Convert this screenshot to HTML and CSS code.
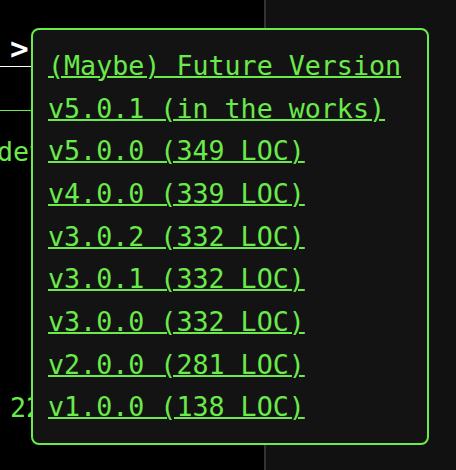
FILE: index.html
```html
<!DOCTYPE html>
<html>
<head>
<meta charset="utf-8">
<link rel="stylesheet" href="styles.css">
</head>
<body>
<div class="layout">
  <div class="left">
    <div class="top-row"><span class="prompt">&gt;</span></div>
    <div class="tab-row"></div>
    <div class="dev-row"><span>devlog</span></div>
    <div class="spacer"></div>
    <div class="num-row"><span>22</span></div>
  </div>
  <div class="divider"></div>
  <div class="right"></div>
</div>
<nav class="versions">
  <a href="#">(Maybe) Future Version</a>
  <a href="#">v5.0.1 (in the works)</a>
  <a href="#">v5.0.0 (349 LOC)</a>
  <a href="#">v4.0.0 (339 LOC)</a>
  <a href="#">v3.0.2 (332 LOC)</a>
  <a href="#">v3.0.1 (332 LOC)</a>
  <a href="#">v3.0.0 (332 LOC)</a>
  <a href="#">v2.0.0 (281 LOC)</a>
  <a href="#">v1.0.0 (138 LOC)</a>
</nav>
</body>
</html>
```
FILE: styles.css
```css
* { box-sizing: border-box; }
html, body {
  margin: 0;
  padding: 0;
  background: #000;
  overflow: hidden;
}
body {
  font-family: "DejaVu Sans Mono", monospace;
  font-size: 26.67px;
  color: #6aea4b;
  width: 456px;
  height: 470px;
  position: relative;
}
.layout {
  display: grid;
  grid-template-columns: 264px 2px 1fr;
  height: 470px;
}
.left {
  background: #000;
  display: flex;
  flex-direction: column;
  overflow: hidden;
}
.top-row {
  height: 67px;
  border-bottom: 1px solid #fff;
  display: flex;
  align-items: flex-end;
  padding: 0 0 2px 10px;
}
.prompt {
  color: #fff;
  font-weight: bold;
  font-size: 31px;
  line-height: 1;
}
.tab-row {
  height: 44px;
  border-bottom: 1px solid #6aea4b;
}
.dev-row {
  line-height: 1;
  padding-top: 28px;
  margin-left: -3px;
  white-space: nowrap;
}
.spacer { flex: 1; }
.num-row {
  line-height: 1;
  padding: 0 0 48px 10px;
}
.divider { background: #333; }
.right { background: #111; }
.versions {
  position: absolute;
  left: 31px;
  top: 28px;
  width: 398px;
  height: 417px;
  background: #131313;
  border: 2px solid #6aea4b;
  border-radius: 8px;
  padding: 15px 15px;
  display: flex;
  flex-direction: column;
}
.versions a {
  color: #6aea4b;
  line-height: 1.6;
  text-decoration: underline;
  text-decoration-thickness: 2px;
  white-space: nowrap;
}
```
